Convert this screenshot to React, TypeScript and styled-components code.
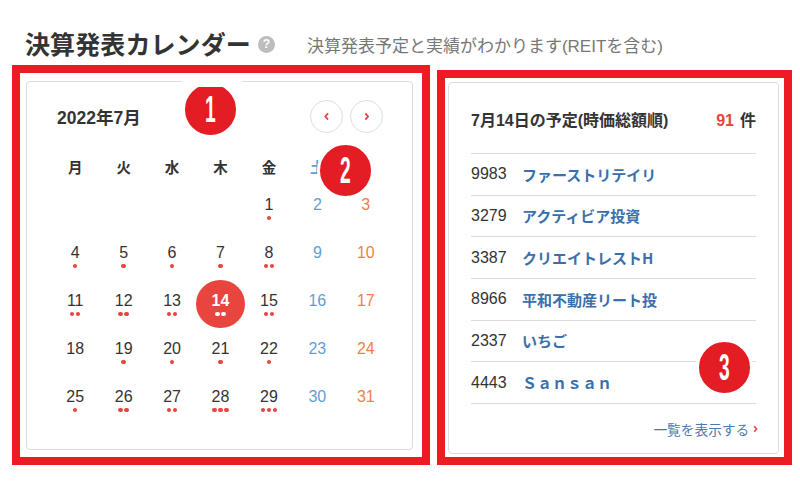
import React from "react";
import styled, { createGlobalStyle, css } from "styled-components";

const Global = createGlobalStyle`
  html, body { margin: 0; padding: 0; background: #fff; }
  body { font-family: "Liberation Sans", "Noto Sans CJK JP", sans-serif; color: #333; }
  * { box-sizing: border-box; }
`;

const JP = `"Liberation Sans", "Noto Sans CJK JP", sans-serif`;

const Page = styled.div`
  width: 800px;
  height: 485px;
  padding: 28px 8px 0 12px;
  overflow: hidden;
`;

const Header = styled.header`
  display: flex;
  align-items: center;
  height: 30px;
  margin-left: 13px;
`;

const Title = styled.h1`
  margin: 0;
  font-family: "Noto Sans CJK JP", sans-serif;
  font-weight: 700;
  font-size: 25px;
  line-height: 30px;
  color: #333;
  letter-spacing: 0.1px;
`;

const Help = styled.span`
  display: inline-flex;
  align-items: center;
  justify-content: center;
  width: 17px;
  height: 17px;
  border-radius: 50%;
  background: #bdbdbd;
  color: #fff;
  font-family: "Liberation Sans", sans-serif;
  font-weight: 700;
  font-size: 12px;
  margin: 2px 0 0 7px;
`;

const Subtitle = styled.p`
  margin: 3px 0 0 32px;
  font-family: ${JP};
  font-size: 17px;
  color: #777;
`;

const Main = styled.main`
  display: flex;
  align-items: flex-end;
  gap: 7px;
  margin-top: 7px;
`;

const Frame = styled.section<{ $w: number; $h: number; $pad: string }>`
  position: relative;
  display: flex;
  width: ${(p) => p.$w}px;
  height: ${(p) => p.$h}px;
  border: 8px solid #ed1c24;
  padding: ${(p) => p.$pad};
`;

const Card = styled.div`
  flex: 1;
  display: flex;
  flex-direction: column;
  border: 1px solid #dcdcdc;
  border-radius: 4px;
  background: #fff;
`;

const CalHead = styled.div`
  display: flex;
  align-items: center;
  justify-content: space-between;
  height: 33px;
  margin: 18px 29px 0 30px;
`;

const Month = styled.div`
  font-family: ${JP};
  font-weight: 700;
  font-size: 17.5px;
  color: #333;
`;

const NavGroup = styled.div`
  display: flex;
  gap: 7px;
`;

const NavBtn = styled.button`
  width: 33px;
  height: 33px;
  border-radius: 50%;
  border: 1px solid #dedede;
  background: #fff;
  padding: 0;
  display: flex;
  align-items: center;
  justify-content: center;
`;

const Grid = styled.div<{ $rowH: number; $top?: number }>`
  display: grid;
  grid-template-columns: repeat(7, 1fr);
  grid-auto-rows: ${(p) => p.$rowH}px;
  margin: ${(p) => p.$top ?? 0}px 22px 0 24px;
`;

const dayColor = (i: number) => (i === 5 ? "#5f9fd6" : i === 6 ? "#f0804a" : "#333");

const Weekday = styled.div<{ $col: number }>`
  display: flex;
  align-items: center;
  justify-content: center;
  font-family: "Noto Sans CJK JP", sans-serif;
  font-weight: 700;
  font-size: 14.5px;
  color: ${(p) => dayColor(p.$col)};
`;

const Cell = styled.div<{ $today?: boolean; $col: number }>`
  display: flex;
  flex-direction: column;
  align-items: center;
  justify-content: center;
  gap: 2px;
  color: ${(p) => dayColor(p.$col)};
  ${(p) =>
    p.$today &&
    css`
      background: #e8453e;
      border-radius: 50%;
      color: #fff;
      font-weight: 700;
    `}
`;

const Num = styled.span`
  font-family: "Liberation Sans", sans-serif;
  font-size: 16px;
  line-height: 18px;
`;

const Dots = styled.span`
  display: flex;
  gap: 1.5px;
  height: 4.5px;
`;

const Dot = styled.i<{ $light?: boolean }>`
  width: 4.5px;
  height: 4.5px;
  border-radius: 50%;
  background: ${(p) => (p.$light ? "#fff" : "#e8433c")};
`;

const ListHead = styled.div`
  display: flex;
  align-items: center;
  justify-content: space-between;
  height: 24px;
  margin: 24px 22px 22px 22px;
  font-family: ${JP};
  font-weight: 700;
  font-size: 16px;
  color: #333;
`;

const Count = styled.span`
  color: #333;
  b {
    color: #e8433c;
    margin-right: 6px;
  }
`;

const List = styled.ul`
  list-style: none;
  margin: 0 22px;
  padding: 0;
  border-bottom: 1px solid #dcdcdc;
`;

const Row = styled.li`
  display: flex;
  align-items: center;
  height: 41.67px;
  border-top: 1px solid #dcdcdc;
`;

const Code = styled.span`
  width: 51px;
  font-family: "Liberation Sans", sans-serif;
  font-size: 16px;
  color: #333;
`;

const Name = styled.a`
  font-family: "Noto Sans CJK JP", sans-serif;
  font-weight: 700;
  font-size: 15px;
  color: #3a70aa;
  text-decoration: none;
`;

const More = styled.a`
  display: flex;
  align-items: center;
  justify-content: flex-end;
  gap: 4px;
  height: 20px;
  margin: 15px 20px 0 22px;
  font-family: "Noto Sans CJK JP", sans-serif;
  font-size: 13.7px;
  color: #4a78b0;
  text-decoration: none;
`;

const Badge = styled.div<{ $x: number; $y: number; $cover?: boolean }>`
  position: absolute;
  left: ${(p) => p.$x}px;
  top: ${(p) => p.$y}px;
  width: 57px;
  height: 57px;
  border: 3px solid #fff;
  border-radius: 50%;
  background: #e41d25;
  display: flex;
  align-items: center;
  justify-content: center;
  z-index: 2;
  ${(p) =>
    p.$cover &&
    css`
      &::before {
        content: "";
        position: absolute;
        left: -3px;
        top: -3px;
        width: 60px;
        height: 6px;
        background: #fff;
        z-index: -1;
      }
    `}
`;

const BadgeNum = styled.span`
  display: inline-block;
  color: #fff;
  font-family: "Liberation Sans", sans-serif;
  font-weight: 700;
  font-size: 37px;
  line-height: 1;
  transform: scaleX(0.52);
`;

const Chevron = ({ dir, size = 9 }: { dir: "l" | "r"; size?: number }) => (
  <svg width={size * 0.6} height={size} viewBox="0 0 6 10">
    <path
      d={dir === "l" ? "M4.5 1.5 L1.5 5 L4.5 8.5" : "M1.5 1.5 L4.5 5 L1.5 8.5"}
      fill="none"
      stroke="#e8433c"
      strokeWidth="2"
    />
  </svg>
);

const weekdays = ["月", "火", "水", "木", "金", "土", "日"];
const dots: Record<number, number> = {
  1: 1, 4: 1, 5: 1, 6: 1, 7: 1, 8: 2, 11: 2, 12: 2, 13: 2, 14: 2, 15: 2,
  19: 1, 20: 1, 21: 1, 22: 1, 25: 1, 26: 2, 27: 2, 28: 3, 29: 3,
};

const cells: (number | null)[] = [null, null, null, null, ...Array.from({ length: 31 }, (_, i) => i + 1)];

const rows = [
  ["9983", "ファーストリテイリ"],
  ["3279", "アクティビア投資"],
  ["3387", "クリエイトレストH"],
  ["8966", "平和不動産リート投"],
  ["2337", "いちご"],
  ["4443", "Ｓａｎｓａｎ"],
];

export default function App() {
  return (
    <Page>
      <Global />
      <Header>
        <Title>決算発表カレンダー</Title>
        <Help>?</Help>
        <Subtitle>決算発表予定と実績がわかります(REITを含む)</Subtitle>
      </Header>
      <Main>
        <Frame $w={418} $h={400} $pad="8px 9px 7px 6px">
          <Card>
            <CalHead>
              <Month>2022年7月</Month>
              <NavGroup>
                <NavBtn aria-label="前月"><Chevron dir="l" /></NavBtn>
                <NavBtn aria-label="次月"><Chevron dir="r" /></NavBtn>
              </NavGroup>
            </CalHead>
            <Grid $rowH={36} $top={15}>
              {weekdays.map((w, i) => (
                <Weekday key={w} $col={i}>{w}</Weekday>
              ))}
            </Grid>
            <Grid $rowH={48}>
              {cells.map((d, i) => {
                const col = i % 7;
                if (d === null) return <Cell key={i} $col={col} />;
                const n = dots[d] || 0;
                const today = d === 14;
                return (
                  <Cell key={i} $col={col} $today={today}>
                    <Num>{d}</Num>
                    <Dots>
                      {Array.from({ length: n }).map((_, k) => (
                        <Dot key={k} $light={today} />
                      ))}
                    </Dots>
                  </Cell>
                );
              })}
            </Grid>
          </Card>
          <Badge $x={161.5} $y={7.5} $cover><BadgeNum>1</BadgeNum></Badge>
          <Badge $x={296.5} $y={68.5}><BadgeNum>2</BadgeNum></Badge>
        </Frame>
        <Frame $w={355} $h={395} $pad="4px 5px 3px 3px">
          <Card>
            <ListHead>
              <span>7月14日の予定(時価総額順)</span>
              <Count><b>91</b>件</Count>
            </ListHead>
            <List>
              {rows.map(([c, n]) => (
                <Row key={c}>
                  <Code>{c}</Code>
                  <Name href="#">{n}</Name>
                </Row>
              ))}
            </List>
            <More href="#">
              一覧を表示する <Chevron dir="r" size={8} />
            </More>
          </Card>
          <Badge $x={250.5} $y={260.5}><BadgeNum>3</BadgeNum></Badge>
        </Frame>
      </Main>
    </Page>
  );
}
